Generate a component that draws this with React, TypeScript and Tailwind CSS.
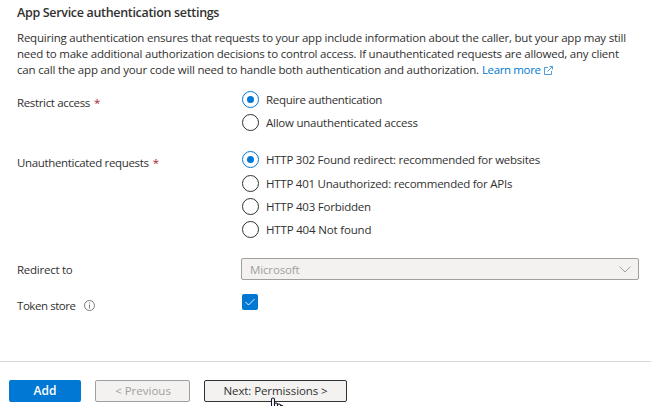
import type { ReactNode } from "react";

function Radio({ checked = false, children, className = "" }: { checked?: boolean; children: ReactNode; className?: string }) {
  return (
    <div className="flex h-[17px] items-center" role="radio" aria-checked={checked}>
      <span
        className={`flex size-[17px] shrink-0 items-center justify-center rounded-full border ${
          checked ? "border-[#0078d4]" : "border-[#323130]"
        }`}
      >
        {checked && <span className="size-[7px] rounded-full bg-[#0078d4]" />}
      </span>
      <span className={`ml-[7px] whitespace-nowrap leading-4 ${className}`}>{children}</span>
    </div>
  );
}

function Required() {
  return <span className="ml-[4px] text-[#a4262c]">*</span>;
}

export default function App() {
  return (
    <main className="flex h-[406px] w-[651px] flex-col overflow-hidden bg-white font-['Open_Sans','Noto_Sans',sans-serif] text-[11.5px] text-[#323130]">
      <h1 className="mt-[4px] ml-[17px] h-[18px] w-fit whitespace-nowrap text-[12.5px] leading-[18px] font-semibold tracking-[-0.32px]">
        App Service authentication settings
      </h1>
      <div className="mt-[8px] ml-[17px] flex flex-col items-start leading-4 whitespace-nowrap">
        <span className="tracking-[-0.217px]">Requiring authentication ensures that requests to your app include information about the caller, but your app may still</span>
        <span className="tracking-[-0.216px]">need to make additional authorization decisions to control access. If unauthenticated requests are allowed, any client</span>
        <span className="flex items-center">
          <span className="tracking-[-0.185px]">can call the app and your code will need to handle both authentication and authorization.</span>
          <a className="ml-[3px] flex items-center text-[#0078d4]">
            <span className="tracking-[-0.36px]">Learn more</span>
            <svg className="ml-[3px] size-[9px]" viewBox="0 0 9 9" fill="none" stroke="#3a93dc" strokeWidth="0.9">
              <path d="M4 1.5H.5v7h7V5M5.5.5h3v3M8.5.5l-5 5" />
            </svg>
          </a>
        </span>
      </div>

      <div className="mt-[13px] flex pl-[17px]">
        <div className="mt-[4px] w-[225px] leading-4"><span className="tracking-[-0.35px]">Restrict access</span><Required /></div>
        <div className="flex flex-col gap-[6px]">
          <Radio checked className="tracking-[-0.3px]">Require authentication</Radio>
          <Radio className="tracking-[-0.24px]">Allow unauthenticated access</Radio>
        </div>
      </div>

      <div className="mt-[20px] flex pl-[17px]">
        <div className="mt-[4px] w-[225px] leading-4"><span className="tracking-[-0.34px]">Unauthenticated requests</span><Required /></div>
        <div className="flex flex-col">
          <Radio checked className="tracking-[-0.24px]">HTTP 302 Found redirect: recommended for websites</Radio>
          <div className="mt-[7px]"><Radio className="tracking-[-0.24px]">HTTP 401 Unauthorized: recommended for APIs</Radio></div>
          <div className="mt-[6px]"><Radio className="tracking-[-0.22px]">HTTP 403 Forbidden</Radio></div>
          <div className="mt-[6px]"><Radio className="tracking-[-0.17px]">HTTP 404 Not found</Radio></div>
        </div>
      </div>

      <div className="mt-[20px] flex h-[22px] items-center pl-[17px]">
        <div className="w-[224px] pt-px leading-4 tracking-[-0.25px]">Redirect to</div>
        <div className="flex h-[22px] w-[398px] items-center justify-between rounded-[2px] border border-[#a19f9d] bg-[#f3f2f1] pr-[7px] pl-[8px] text-[#a19f9d]">
          <span className="pt-px leading-4 tracking-[-0.14px]">Microsoft</span>
          <svg className="h-[7px] w-[12px]" viewBox="0 0 12 7" fill="none" stroke="#a19f9d">
            <path d="M.5.5 6 6 11.500.5" />
          </svg>
        </div>
      </div>

      <div className="mt-[14px] flex h-[16px] pl-[17px]">
        <div className="mt-[4px] flex h-4 w-[225px] items-center leading-4">
          <span className="tracking-[-0.44px]">Token store</span>
          <svg className="mb-px ml-[8px] size-[11px]" viewBox="0 0 11 11" fill="none" stroke="#605e5c" strokeWidth="0.8">
            <circle cx="5.500" cy="5.500" r="5" />
            <path d="M5.500 4.500v4M5.500 2.500v1" />
          </svg>
        </div>
        <span className="flex size-[16px] items-center justify-center rounded-[2px] bg-[#0078d4]">
          <svg className="h-[8px] w-[10px]" viewBox="0 0 10 8" fill="none" stroke="#fff" strokeWidth="0.9">
            <path d="M.5 4 3.500 7 9.500 1" />
          </svg>
        </span>
      </div>

      <footer className="mt-[51px] flex border-t border-[#d9d8d7] pt-[18px] pl-[9px]">
        <button className="h-[22px] w-[72px] rounded-[2px] bg-[#0078d4] text-[12px] font-semibold text-white">Add</button>
        <button className="ml-[14px] h-[22px] w-[95px] rounded-[2px] border border-[#a19f9d] bg-[#f3f2f1] pl-px text-[#a19f9d]">&lt; Previous</button>
        <button className="relative ml-[14px] h-[22px] w-[143px] rounded-[2px] border border-[#323130] bg-[#f3f2f1] tracking-[-0.09px] whitespace-nowrap">
          Next: Permissions &gt;
          <svg className="absolute top-[16px] left-[63px] h-[20px] w-[16px]" viewBox="0 0 16 20" fill="#fff" stroke="#15152b" strokeWidth="1.1">
            <path d="M3.500 12V2.500c0-2 3-2 3 0v4c1-1 3-.500 3 1 1-1 3-.500 3 1 1-.500 2.500 0 2.500 1.500v5l-2 4H6L1 12z" />
            <path d="M6.500 6.500V10M9.500 7.500V10M12.500 8.500V10" />
          </svg>
        </button>
      </footer>
    </main>
  );
}
